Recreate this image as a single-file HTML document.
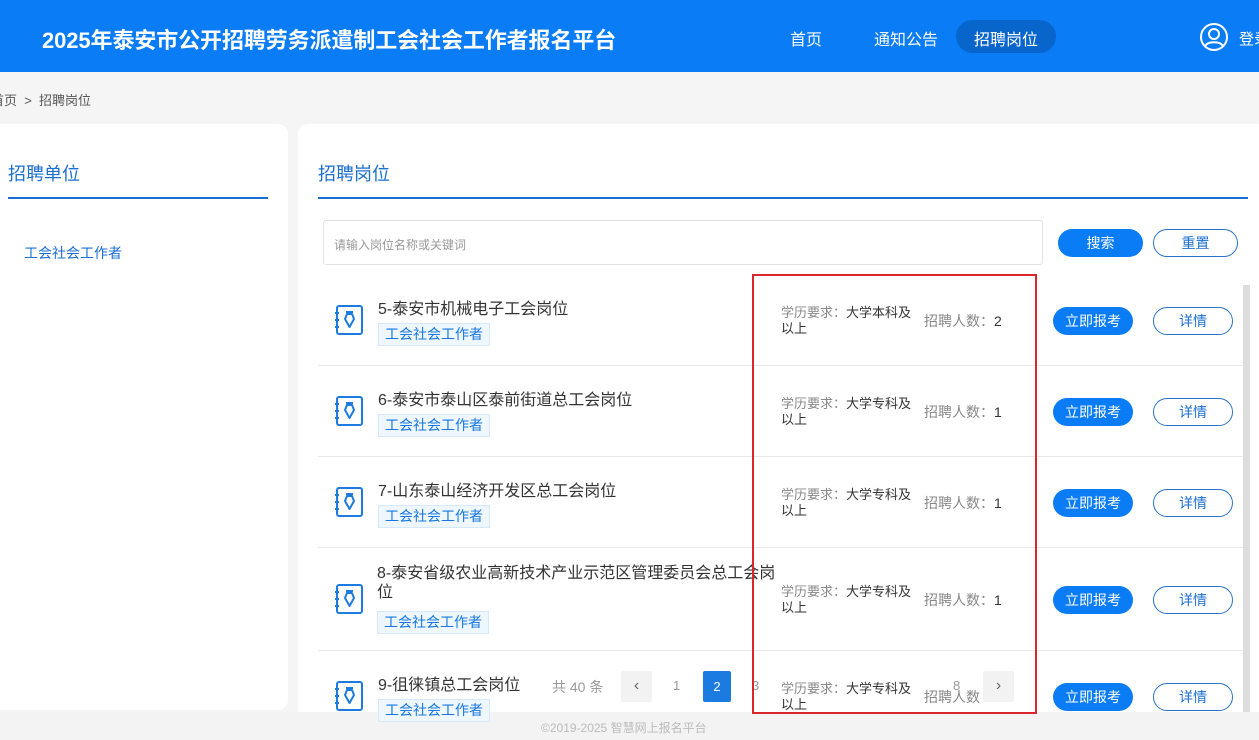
<!DOCTYPE html>
<html><head><meta charset="utf-8"><style>
*{margin:0;padding:0;box-sizing:border-box}
body{width:1259px;height:740px;overflow:hidden;background:#f5f5f5;font-family:"Liberation Sans","Noto Sans CJK SC",sans-serif;position:relative;color:#333}
.a{position:absolute;white-space:nowrap}
.hdr{position:absolute;left:0;top:0;width:1259px;height:72px;background:#0a7cf5}
.panel{position:absolute;background:#fff;border-radius:10px}
.tag{position:absolute;height:23px;line-height:21px;padding:0 6px;border:1px solid #d6e8fb;background:#eef6fe;color:#1677e0;font-size:14px}
.btnp{position:absolute;width:80px;height:28px;border-radius:14px;background:#0a7cf5;color:#fff;font-size:14px;text-align:center;line-height:28px}
.btno{position:absolute;width:80px;height:28px;border-radius:14px;border:1px solid #2a72c7;color:#1b6fd0;font-size:14px;text-align:center;line-height:26px;background:#fff}
.sep{position:absolute;left:318px;width:925px;height:1px;background:#e8e8e8}
.ttl{font-size:16px;color:#333}
.edu{font-size:13px;color:#888;line-height:16px}
.edu b{font-weight:normal;color:#333}
.cnt{font-size:14px;color:#888}
.cnt b{font-weight:normal;color:#333}
</style></head><body>
<div class="hdr"></div>
<div class="a" style="left:42px;top:23px;font-size:22px;font-weight:bold;color:#fff;letter-spacing:-0.1px">2025年泰安市公开招聘劳务派遣制工会社会工作者报名平台</div>
<div class="a" style="left:790px;top:26px;font-size:16px;color:#fff">首页</div>
<div class="a" style="left:874px;top:26px;font-size:16px;color:#fff">通知公告</div>
<div class="a" style="left:956px;top:20px;width:100px;height:33px;border-radius:17px;background:#0765cc"></div>
<div class="a" style="left:974px;top:26px;font-size:16px;color:#fff">招聘岗位</div>
<svg class="a" style="left:1199px;top:22px" width="30" height="30" viewBox="0 0 30 30"><circle cx="15" cy="15" r="13" fill="none" stroke="#fff" stroke-width="2"/><circle cx="15" cy="12" r="5" fill="none" stroke="#fff" stroke-width="2"/><path d="M6 24c3-5 15-5 18 0" fill="none" stroke="#fff" stroke-width="2"/></svg>
<div class="a" style="left:1239px;top:28px;font-size:15px;color:#fff">登录</div>

<div class="a" style="left:-9px;top:90px;font-size:13px;color:#555">首页 &nbsp;&gt;&nbsp; 招聘岗位</div>

<div class="panel" style="left:-10px;top:124px;width:298px;height:586px"></div>
<div class="a" style="left:8px;top:160px;font-size:18px;color:#1b6fd0">招聘单位</div>
<div class="a" style="left:8px;top:197px;width:260px;height:2px;background:#1b6fd0"></div>
<div class="a" style="left:24px;top:243px;font-size:14px;color:#1b6fd0">工会社会工作者</div>

<div class="panel" style="left:298px;top:124px;width:970px;height:600px"></div>
<div class="a" style="left:318px;top:160px;font-size:18px;color:#1b6fd0">招聘岗位</div>
<div class="a" style="left:318px;top:197px;width:930px;height:2px;background:#1b6fd0"></div>
<div class="a" style="left:323px;top:220px;width:720px;height:45px;border:1px solid #e2e2e2;border-radius:3px"></div>
<div class="a" style="left:334px;top:236px;font-size:12px;color:#999">请输入岗位名称或关键词</div>
<div class="btnp" style="left:1058px;top:229px;width:85px;height:28px">搜索</div>
<div class="btno" style="left:1153px;top:229px;width:85px">重置</div>
<div class="a" style="left:1243px;top:285px;width:7px;height:440px;background:#ddd"></div>

<div class="sep" style="top:365px"></div>
<div class="sep" style="top:456px"></div>
<div class="sep" style="top:547px"></div>
<div class="sep" style="top:650px"></div>

<svg width="0" height="0" style="position:absolute"><defs><g id="ic"><rect x="3" y="1" width="25" height="28" rx="2" fill="none" stroke="#1b7be0" stroke-width="2"/><path d="M1 8h4M1 15h4M1 22h4" stroke="#1b7be0" stroke-width="2"/><path d="M12 7h7M13 9l-2 5 4.5 8 4.5-8-2-5z" fill="none" stroke="#1b7be0" stroke-width="2" stroke-linejoin="round"/></g></defs></svg>

<svg class="a" style="left:334px;top:305px" width="30" height="30"><use href="#ic"/></svg>
<div class="a ttl" style="left:378px;top:295px">5-泰安市机械电子工会岗位</div>
<div class="tag" style="left:378px;top:323px">工会社会工作者</div>
<div class="a edu" style="left:781px;top:305px">学历要求：<b>大学本科及</b><br><b>以上</b></div>
<div class="a cnt" style="left:924px;top:311px">招聘人数：<b>2</b></div>
<div class="btnp" style="left:1053px;top:307px">立即报考</div>
<div class="btno" style="left:1153px;top:307px">详情</div>

<svg class="a" style="left:334px;top:396px" width="30" height="30"><use href="#ic"/></svg>
<div class="a ttl" style="left:378px;top:386px">6-泰安市泰山区泰前街道总工会岗位</div>
<div class="tag" style="left:378px;top:414px">工会社会工作者</div>
<div class="a edu" style="left:781px;top:396px">学历要求：<b>大学专科及</b><br><b>以上</b></div>
<div class="a cnt" style="left:924px;top:402px">招聘人数：<b>1</b></div>
<div class="btnp" style="left:1053px;top:398px">立即报考</div>
<div class="btno" style="left:1153px;top:398px">详情</div>

<svg class="a" style="left:334px;top:487px" width="30" height="30"><use href="#ic"/></svg>
<div class="a ttl" style="left:378px;top:477px">7-山东泰山经济开发区总工会岗位</div>
<div class="tag" style="left:378px;top:505px">工会社会工作者</div>
<div class="a edu" style="left:781px;top:487px">学历要求：<b>大学专科及</b><br><b>以上</b></div>
<div class="a cnt" style="left:924px;top:493px">招聘人数：<b>1</b></div>
<div class="btnp" style="left:1053px;top:489px">立即报考</div>
<div class="btno" style="left:1153px;top:489px">详情</div>

<svg class="a" style="left:334px;top:584px" width="30" height="30"><use href="#ic"/></svg>
<div class="a ttl" style="left:377px;top:564px;line-height:19px;white-space:normal;width:405px">8-泰安省级农业高新技术产业示范区管理委员会总工会岗位</div>
<div class="tag" style="left:377px;top:611px">工会社会工作者</div>
<div class="a edu" style="left:781px;top:584px">学历要求：<b>大学专科及</b><br><b>以上</b></div>
<div class="a cnt" style="left:924px;top:590px">招聘人数：<b>1</b></div>
<div class="btnp" style="left:1053px;top:586px">立即报考</div>
<div class="btno" style="left:1153px;top:586px">详情</div>

<svg class="a" style="left:334px;top:681px" width="30" height="30"><use href="#ic"/></svg>
<div class="a ttl" style="left:378px;top:671px">9-徂徕镇总工会岗位</div>
<div class="a" style="left:552px;top:677px;font-size:14px;color:#999">共 40 条</div>
<div class="a" style="left:621px;top:671px;width:31px;height:31px;background:#f2f2f2;border-radius:2px;text-align:center;line-height:30px;color:#666;font-size:16px">&lsaquo;</div>
<div class="a" style="left:673px;top:678px;font-size:13px;color:#999">1</div>
<div class="a" style="left:703px;top:671px;width:28px;height:31px;background:#1b7be0;border-radius:2px;text-align:center;line-height:31px;color:#fff;font-size:13px">2</div>
<div class="a" style="left:752px;top:678px;font-size:13px;color:#999">3</div>
<div class="a" style="left:953px;top:678px;font-size:13px;color:#999">8</div>
<div class="a" style="left:983px;top:671px;width:31px;height:31px;background:#f2f2f2;border-radius:2px;text-align:center;line-height:30px;color:#666;font-size:16px">&rsaquo;</div>
<div class="a edu" style="left:781px;top:681px">学历要求：<b>大学专科及</b><br><b>以上</b></div>
<div class="a cnt" style="left:924px;top:687px">招聘人数</div>
<div class="btnp" style="left:1053px;top:683px">立即报考</div>
<div class="btno" style="left:1153px;top:683px">详情</div>

<div class="a" style="left:0;top:712px;width:1259px;height:28px;background:#f3f3f3"></div>
<div class="tag" style="left:378px;top:699px">工会社会工作者</div>
<div class="a" style="left:541px;top:719px;font-size:12px;color:#bbb">©2019-2025 智慧网上报名平台</div>

<div class="a" style="left:752px;top:274px;width:285px;height:440px;border:2px solid #d9262c"></div>
</body></html>
